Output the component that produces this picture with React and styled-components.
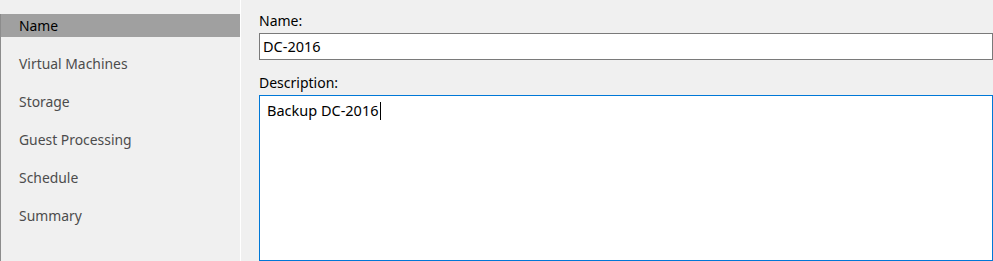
import React from "react";
import styled, { createGlobalStyle } from "styled-components";

const GlobalStyle = createGlobalStyle`
  html, body {
    margin: 0;
    padding: 0;
    background: #f0f0f0;
  }
  body {
    font-family: "Noto Sans", "Open Sans", "Liberation Sans", sans-serif;
  }
`;

const Page = styled.div`
  display: flex;
  width: 993px;
  height: 261px;
  overflow: hidden;
  background: #f0f0f0;
`;

const Sidebar = styled.nav`
  width: 240px;
  flex: none;
  padding-top: 14px;
  border-right: 1px solid #ffffff;
  box-sizing: content-box;
`;

const StepList = styled.ul`
  list-style: none;
  margin: 0;
  padding: 0;
  height: 100%;
  border-left: 1px solid #8c8c8c;
  display: flex;
  flex-direction: column;
  gap: 15px;
`;

const Step = styled.li`
  box-sizing: border-box;
  height: 23px;
  line-height: 23px;
  padding-left: 18px;
  font-size: 13.9px;
  color: ${({ active }) => (active ? "#000000" : "#4c4c4c")};
  background: ${({ active }) => (active ? "#a0a0a0" : "transparent")};
`;

const Panel = styled.section`
  flex: 1;
  display: flex;
  flex-direction: column;
  padding: 11px 0 0 18px;
`;

const Label = styled.label`
  display: block;
  font-size: 14px;
  line-height: 20px;
  color: #000000;
  margin-top: ${({ first }) => (first ? "0" : "13px")};
  margin-bottom: 2px;
`;

const TextInput = styled.input`
  box-sizing: border-box;
  width: 100%;
  height: 27px;
  margin: 0;
  padding: 0 3px;
  border: 1px solid #7a7a7a;
  background: #ffffff;
  font-family: inherit;
  font-size: 14.5px;
  color: #000000;
  outline: none;
`;

const TextArea = styled.div`
  box-sizing: border-box;
  width: 100%;
  height: 168px;
  padding: 4px 7px;
  border: 1px solid #0078d7;
  background: #ffffff;
  font-size: 14.5px;
  line-height: 20px;
  color: #000000;
`;

const Caret = styled.span`
  display: inline-block;
  width: 1px;
  height: 18px;
  margin-left: 1px;
  vertical-align: -4px;
  background: #000000;
`;

const steps = [
  "Name",
  "Virtual Machines",
  "Storage",
  "Guest Processing",
  "Schedule",
  "Summary",
];

export default function App() {
  return (
    <>
      <GlobalStyle />
      <Page>
        <Sidebar>
          <StepList>
            {steps.map((s, i) => (
              <Step key={s} active={i === 0}>
                {s}
              </Step>
            ))}
          </StepList>
        </Sidebar>
        <Panel>
          <Label first htmlFor="job-name">Name:</Label>
          <TextInput id="job-name" defaultValue="DC-2016" />
          <Label>Description:</Label>
          <TextArea role="textbox">
            Backup DC-2016
            <Caret />
          </TextArea>
        </Panel>
      </Page>
    </>
  );
}
